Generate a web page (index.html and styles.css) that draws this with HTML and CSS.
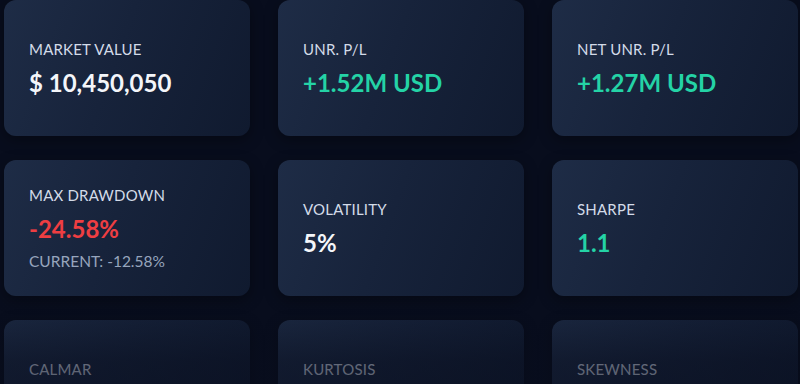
FILE: index.html
```
<!DOCTYPE html>
<html>
<head>
    <meta charset="UTF-8">
    <meta name="viewport" content="width=device-width, initial-scale=1.0">
    <title>Portfolio Stats</title>
    <link rel="stylesheet" href="styles.css">
</head>
<body>
    <div class="stats">
        <div class="card">
            <div class="label">MARKET VALUE</div>
            <div class="value">$ 10,450,050</div>
        </div>
        <div class="card">
            <div class="label">UNR. P/L</div>
            <div class="value up">+1.52M USD</div>
        </div>
        <div class="card">
            <div class="label">NET UNR. P/L</div>
            <div class="value up">+1.27M USD</div>
        </div>

        <div class="card">
            <div class="label">MAX DRAWDOWN</div>
            <div class="value down">-24.58%</div>
            <div class="sub">CURRENT: -12.58%</div>
        </div>
        <div class="card">
            <div class="label">VOLATILITY</div>
            <div class="value">5%</div>
        </div>
        <div class="card">
            <div class="label">SHARPE</div>
            <div class="value up">1.1</div>
        </div>

        <div class="card">
            <div class="label">CALMAR</div>
            <div class="value up">0.8</div>
        </div>
        <div class="card">
            <div class="label">KURTOSIS</div>
            <div class="value">3.2</div>
        </div>
        <div class="card">
            <div class="label">SKEWNESS</div>
            <div class="value down">-0.4</div>
        </div>
    </div>
</body>
</html>
```

FILE: styles.css
```
body {
    font-family: "Lato", "Noto Sans", sans-serif;
    margin: 0;
    padding: 0;
    background-color: #080d1d;
    color: #f2f5fa;
    height: 384px;
    overflow: hidden;
    position: relative;
}

/* fade the bottom row into the page */
body::after {
    content: "";
    position: absolute;
    left: 0;
    right: 0;
    bottom: 0;
    height: 90px;
    background: linear-gradient(to bottom, rgba(8, 13, 29, 0) 0%, rgba(8, 13, 29, 0.55) 75%, rgba(8, 13, 29, 0.6) 100%);
    pointer-events: none;
}

.stats {
    display: grid;
    grid-template-columns: repeat(3, 246px);
    grid-auto-rows: 136px;
    column-gap: 28px;
    row-gap: 24px;
    padding: 0 0 0 4px;
}

.card {
    display: flex;
    flex-direction: column;
    justify-content: center;
    padding: 0 24px 0 25px;
    border-radius: 12px;
    background: linear-gradient(110deg, #1e2c46 0%, #17233b 45%, #101a2f 100%);
    box-shadow: 0 4px 14px rgba(0, 0, 0, 0.35);
}

.label {
    font-size: 15px;
    letter-spacing: 0.2px;
    color: #d3dbe8;
}

.value {
    font-size: 24px;
    font-weight: 700;
    margin-top: 10px;
    color: #f4f6fa;
}

.up {
    color: #24d3a6;
}

.down {
    color: #ee3e42;
}

.sub {
    font-size: 15.5px;
    color: #97a5bd;
    margin-top: 9px;
}
```
